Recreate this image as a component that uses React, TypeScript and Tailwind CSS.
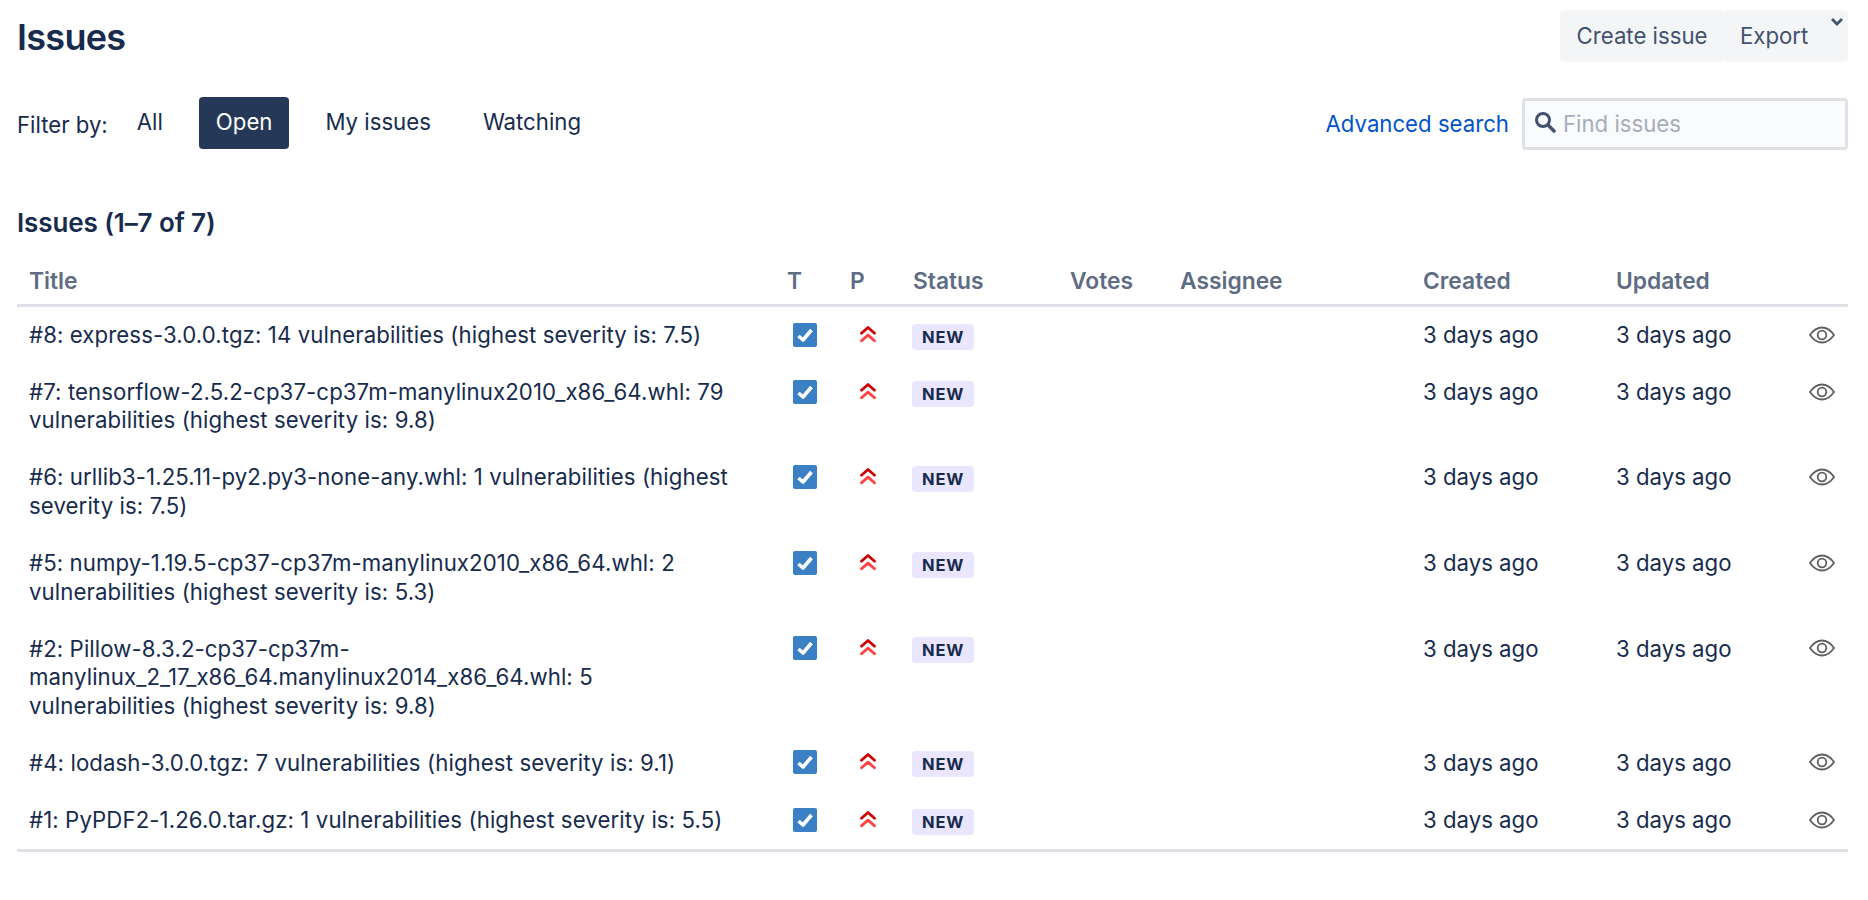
const issues = [
  { id: 1, title: "#8: express-3.0.0.tgz: 14 vulnerabilities (highest severity is: 7.5)" },
  { id: 2, title: "#7: tensorflow-2.5.2-cp37-cp37m-manylinux2010_x86_64.whl: 79 vulnerabilities (highest severity is: 9.8)" },
  { id: 3, title: "#6: urllib3-1.25.11-py2.py3-none-any.whl: 1 vulnerabilities (highest severity is: 7.5)" },
  { id: 4, title: "#5: numpy-1.19.5-cp37-cp37m-manylinux2010_x86_64.whl: 2 vulnerabilities (highest severity is: 5.3)" },
  { id: 5, title: "#2: Pillow-8.3.2-cp37-cp37m-manylinux_2_17_x86_64.manylinux2014_x86_64.whl: 5 vulnerabilities (highest severity is: 9.8)" },
  { id: 6, title: "#4: lodash-3.0.0.tgz: 7 vulnerabilities (highest severity is: 9.1)" },
  { id: 7, title: "#1: PyPDF2-1.26.0.tar.gz: 1 vulnerabilities (highest severity is: 5.5)" },
];

const TaskIcon = () => (
  <svg width="24" height="24" viewBox="0 0 24 24" className="block">
    <rect width="24" height="24" rx="2" fill="#3b7fc4" />
    <path d="M5.500 13l4.500 4 8.500-10" fill="none" stroke="#fff" strokeWidth="3.600" strokeLinejoin="round" />
  </svg>
);

const PriorityIcon = () => (
  <svg width="16" height="18" viewBox="0 0 16 18" className="block">
    <path d="M1.500 8.200L8 2.500l6.500 5.700" fill="none" stroke="#cc0000" strokeWidth="2.800" strokeLinecap="round" strokeLinejoin="round" />
    <path d="M1.500 15.800L8 10.100l6.500 5.700" fill="none" stroke="#ff4242" strokeWidth="2.800" strokeLinecap="round" strokeLinejoin="round" />
  </svg>
);

const EyeIcon = () => (
  <svg width="26" height="18" viewBox="0 0 26 18" className="block">
    <path d="M1 9C4.500 4 8.500 1.500 13 1.500S21.500 4 25 9c-3.500 5-7.500 7.500-12 7.500S4.500 14 1 9z" fill="none" stroke="#5f5f5f" strokeWidth="1.800" />
    <circle cx="13" cy="9" r="4.300" fill="none" stroke="#5f5f5f" strokeWidth="1.800" />
  </svg>
);

export default function App() {
  return (
    <div className="min-h-[900px] bg-white pl-[17px] pr-[20px] font-['Inter',sans-serif] text-[22.2px] leading-[28.5px] text-[#172b4d]">
      <div className="flex items-start justify-between pt-[10px]">
        <h1 className="mt-[6px] text-[36px] font-semibold leading-[42px] tracking-[-0.7px] text-[#172b4d]">Issues</h1>
        <div className="flex text-[#42526e]">
          <button className="flex h-[52px] w-[164px] items-center justify-center rounded bg-[#f4f5f7]">Create issue</button>
          <button className="relative flex h-[52px] w-[124px] items-center rounded bg-[#f4f5f7] pl-4">
            Export
            <svg width="14" height="10" viewBox="0 0 14 10" className="absolute right-[4px] top-[7px]">
              <path d="M2 2l5 5 5-5" fill="none" stroke="#42526e" strokeWidth="2.800" />
            </svg>
          </button>
        </div>
      </div>

      <div className="mt-[35px] flex h-[54px] items-center justify-between">
        <div className="flex items-center">
          <span className="mr-[13px] mt-[2px]">Filter by:</span>
          <div className="-mt-[2px] flex gap-[20px]">
            <a className="flex h-[52px] items-center rounded px-4 pb-[2px]">All</a>
            <a className="flex h-[52px] items-center rounded bg-[#253858] px-[17px] pb-[2px] text-white">Open</a>
            <a className="flex h-[52px] items-center rounded px-4 pb-[2px]">My issues</a>
            <a className="flex h-[52px] items-center rounded px-4 pb-[2px]">Watching</a>
          </div>
        </div>
        <div className="flex items-center gap-[13px]">
          <a className="mt-[1px] text-[#0052cc]">Advanced search</a>
          <div className="flex h-[52px] w-[326px] items-center rounded border-[3px] border-[#dfe1e6] bg-[#fafbfc] pl-[9px]">
            <svg width="22" height="22" viewBox="0 0 22 22" className="mb-1 shrink-0">
              <circle cx="9" cy="9" r="6.500" fill="none" stroke="#42526e" strokeWidth="3" />
              <path d="M14 14l6 6" stroke="#42526e" strokeWidth="3.400" strokeLinecap="round" />
            </svg>
            <span className="ml-[7px] mt-[1px] text-[#a5adba]">Find issues</span>
          </div>
        </div>
      </div>

      <h2 className="mt-[57px] text-[26px] font-semibold leading-[30px] tracking-[-0.1px]">Issues (1–7 of 7)</h2>

      <table className="mt-[22px] w-full table-fixed border-collapse border-b-[3px] border-[#dfe1e6]">
        <colgroup>
          <col className="w-[756px]" />
          <col className="w-[63px]" />
          <col className="w-[62px]" />
          <col className="w-[158px]" />
          <col className="w-[110px]" />
          <col className="w-[242px]" />
          <col className="w-[194px]" />
          <col className="w-[193px]" />
          <col />
        </colgroup>
        <thead>
          <tr className="border-b-[3px] border-[#dfe1e6] text-left text-[22.800px] text-[#5e6c84]">
            <th className="pb-[8px] pl-[12px] pr-[14px] pt-[7px] font-semibold">Title</th>
            <th className="pb-[8px] pl-[14px] pt-[7px] font-semibold">T</th>
            <th className="pb-[8px] pl-[14px] pt-[7px] font-semibold">P</th>
            <th className="pb-[8px] pl-[15px] pt-[7px] font-semibold">Status</th>
            <th className="pb-[8px] pl-[14px] pt-[7px] font-semibold">Votes</th>
            <th className="pb-[8px] pl-[14px] pt-[7px] font-semibold">Assignee</th>
            <th className="pb-[8px] pl-[15px] pt-[7px] font-semibold">Created</th>
            <th className="pb-[8px] pl-[14px] pt-[7px] font-semibold">Updated</th>
            <th></th>
          </tr>
        </thead>
        <tbody>
          {issues.map((issue) => (
            <tr key={issue.id} className="align-top">
              <td className="py-[14.3px] pl-[12px] pr-[30px] tracking-[0.1px]">{issue.title}</td>
              <td className="pl-[20px] pt-[16px]"><TaskIcon /></td>
              <td className="pl-[24px] pt-[18px]"><PriorityIcon /></td>
              <td className="px-[14px] pt-[17px]">
                <span className="inline-block h-[26px] rounded bg-[#eae6ff] px-[10px] align-top text-[16.500px] font-bold leading-[26px] tracking-[0.8px]">NEW</span>
              </td>
              <td></td>
              <td></td>
              <td className="py-[14.3px] pl-[15px]">3 days ago</td>
              <td className="py-[14.3px] pl-[14px]">3 days ago</td>
              <td className="pl-[14px] pt-[19px]"><EyeIcon /></td>
            </tr>
          ))}
        </tbody>
      </table>
    </div>
  );
}
